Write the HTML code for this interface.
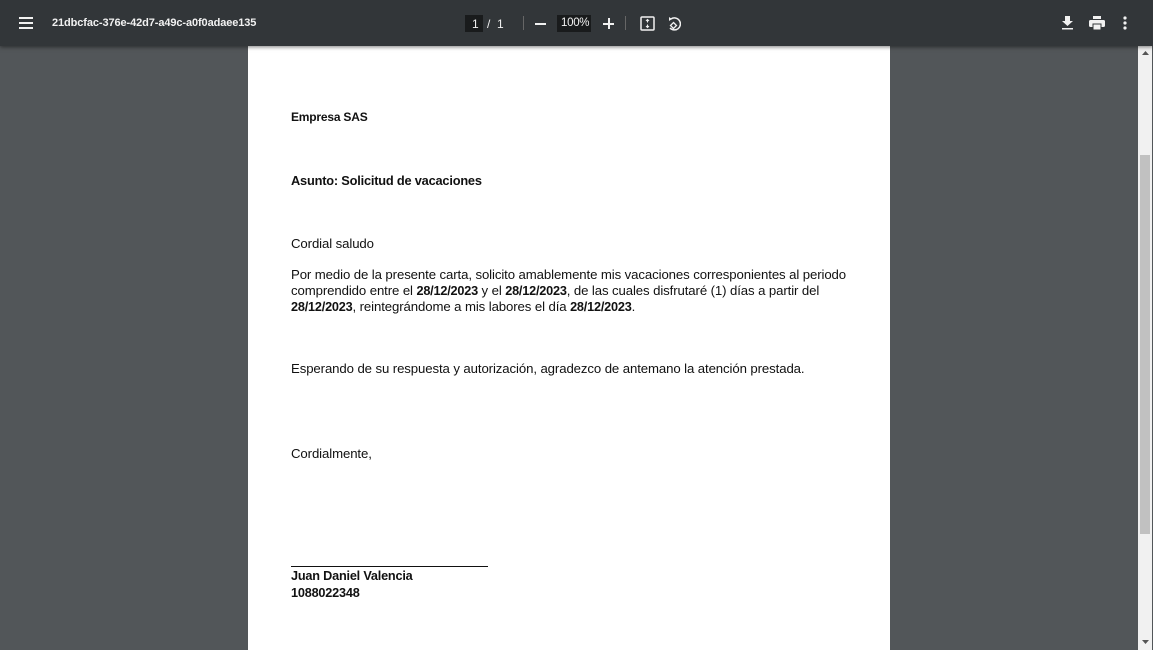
<!DOCTYPE html>
<html><head><meta charset="utf-8"><style>
*{margin:0;padding:0;box-sizing:border-box}
body{width:1153px;height:650px;overflow:hidden;background:#525659;font-family:"Liberation Sans",sans-serif;position:relative}
.tb{position:absolute;left:0;top:0;width:1153px;height:46px;background:#323639;box-shadow:0 1px 4px rgba(0,0,0,.5);z-index:2;color:#f1f1f1}
.t{position:absolute;font-size:13px;top:16px}
.page{position:absolute;left:248px;top:46px;width:642px;height:604px;background:#fff}
.p{position:absolute;left:43px;font-size:13.2px;color:#111;line-height:15.5px;letter-spacing:-0.1px;white-space:nowrap}
b{font-weight:bold;font-size:12.7px;letter-spacing:-0.2px}
.sb{position:absolute;left:1138px;top:46px;width:14px;height:604px;background:#f1f1f1}
.th{position:absolute;left:2px;top:109px;width:10px;height:379px;background:#c1c1c1}
</style></head><body>
<div class="tb">
<svg style="position:absolute;left:19px;top:17px" width="14" height="12"><rect y="0" width="14" height="2" fill="#f1f1f1"/><rect y="5" width="14" height="2" fill="#f1f1f1"/><rect y="10" width="14" height="2" fill="#f1f1f1"/></svg>
<div class="t" style="left:52px;font-size:11px;font-weight:bold;top:17px;letter-spacing:-0.1px">21dbcfac-376e-42d7-a49c-a0f0adaee135</div>
<div style="position:absolute;left:465px;top:15px;width:18px;height:17px;background:#191b1c"></div>
<div class="t" style="left:472px;font-size:12px;top:17px">1</div>
<div class="t" style="left:487px;font-size:12px;top:17px">/ &nbsp;1</div>
<div style="position:absolute;left:523px;top:16px;width:1px;height:14px;background:#666"></div>
<div style="position:absolute;left:535px;top:23px;width:11px;height:1.5px;background:#f1f1f1"></div>
<div style="position:absolute;left:557px;top:15px;width:34px;height:17px;background:#191b1c"></div>
<div class="t" style="left:561px;font-size:11.5px;top:17px;letter-spacing:-0.3px">100%</div>
<div style="position:absolute;left:603px;top:23px;width:11px;height:1.5px;background:#f1f1f1"></div>
<div style="position:absolute;left:608px;top:18px;width:1.5px;height:11px;background:#f1f1f1"></div>
<div style="position:absolute;left:625px;top:16px;width:1px;height:14px;background:#666"></div>
<svg style="position:absolute;left:640px;top:16px" width="15" height="15"><rect x="1" y="1" width="13" height="13" fill="none" stroke="#f1f1f1" stroke-width="1.5" rx="1"/><path d="M7.5 4v2.5M6 5l1.5-1.5L9 5M7.5 11V8.5M6 10l1.5 1.5L9 10" stroke="#f1f1f1" fill="none"/></svg>
<svg style="position:absolute;left:666px;top:15px" width="15" height="17"><path d="M5 4a6 6 0 1 1-1 9" fill="none" stroke="#f1f1f1" stroke-width="1.5"/><path d="M7.5 7.5l3 3-3 3-3-3z" fill="none" stroke="#f1f1f1" stroke-width="1.3"/><path d="M3 2l3 2-3 2z" fill="#f1f1f1"/></svg>
<svg style="position:absolute;left:1061px;top:16px" width="13" height="14"><path d="M4 0h5v5h3L6.5 10 1 5h3z" fill="#f1f1f1"/><rect x="1" y="12" width="11" height="1.5" fill="#f1f1f1"/></svg>
<svg style="position:absolute;left:1089px;top:16px" width="16" height="14"><rect x="4" y="0" width="8" height="3" fill="#f1f1f1"/><rect x="0" y="4" width="16" height="7" rx="1.5" fill="#f1f1f1"/><rect x="4" y="8" width="8" height="6" fill="#f1f1f1" stroke="#323639"/></svg>
<svg style="position:absolute;left:1123px;top:16px" width="4" height="14"><circle cx="2" cy="2" r="1.6" fill="#f1f1f1"/><circle cx="2" cy="7" r="1.6" fill="#f1f1f1"/><circle cx="2" cy="12" r="1.6" fill="#f1f1f1"/></svg>
</div>
<div class="page">
<div class="p" style="top:63px"><b style="font-size:12px">Empresa SAS</b></div>
<div class="p" style="top:127px"><b style="font-size:12.8px">Asunto: Solicitud de vacaciones</b></div>
<div class="p" style="top:190px">Cordial saludo</div>
<div class="p" style="top:221px">Por medio de la presente carta, solicito amablemente mis vacaciones corresponientes al periodo<br>comprendido entre el <b>28/12/2023</b> y el <b>28/12/2023</b>, de las cuales disfrutaré (1) días a partir del<br><b>28/12/2023</b>, reintegrándome a mis labores el día <b>28/12/2023</b>.</div>
<div class="p" style="top:315px">Esperando de su respuesta y autorización, agradezco de antemano la atención prestada.</div>
<div class="p" style="top:400px">Cordialmente,</div>
<div style="position:absolute;left:43px;top:520px;width:197px;height:1px;background:#111"></div>
<div class="p" style="top:522px"><b>Juan Daniel Valencia<br>1088022348</b></div>
</div>
<div class="sb"><div class="th"></div>
<svg style="position:absolute;left:4px;top:5px" width="7" height="4"><path d="M0 4L3.5 0 7 4z" fill="#555"/></svg>
<svg style="position:absolute;left:4px;top:594px" width="7" height="4"><path d="M0 0L3.5 4 7 0z" fill="#555"/></svg>
</div>
</body></html>
